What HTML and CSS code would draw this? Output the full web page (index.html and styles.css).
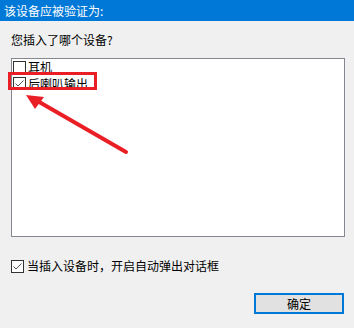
FILE: index.html
```html
<!DOCTYPE html>
<html lang="zh-CN">
<head>
<meta charset="utf-8">
<title>设备</title>
<link rel="stylesheet" href="styles.css">
</head>
<body>
<div class="titlebar">该设备应被验证为:</div>
<div class="content">
  <div class="question">您插入了哪个设备?</div>
  <div class="listbox">
    <div class="item"><span class="cb"></span><span>耳机</span></div>
    <div class="item"><span class="cb checked"><svg viewBox="0 0 11 11" width="11" height="11"><path d="M1.5 5.5 L4 8 L9.5 2.5" fill="none" stroke="#555" stroke-width="1"/></svg></span><span>后喇叭输出</span></div>
  </div>
  <div class="autorow"><span class="cb checked"><svg viewBox="0 0 11 11" width="11" height="11"><path d="M1.5 5.5 L4 8 L9.5 2.5" fill="none" stroke="#555" stroke-width="1"/></svg></span><span>当插入设备时，开启自动弹出对话框</span></div>
  <div class="buttons"><button class="btn">确定</button></div>
</div>
<div class="highlight"></div>
<svg class="arrow" width="354" height="328" viewBox="0 0 354 328">
  <line x1="126" y1="152" x2="34" y2="99" stroke="#ea1f26" stroke-width="4" stroke-linecap="round"/>
  <polygon points="26,95 44,97 35,109" fill="#ea1f26"/>
</svg>
</body>
</html>
```
FILE: styles.css
```css
html, body {
  margin: 0;
  padding: 0;
}
body {
  width: 354px;
  height: 328px;
  background: #f0f0f0;
  font-family: "Noto Sans CJK SC", "Microsoft YaHei", sans-serif;
  font-size: 12px;
  color: #000;
  position: relative;
  overflow: hidden;
}
.titlebar {
  height: 21px;
  line-height: 21px;
  background: #0078d7;
  color: #fff;
  padding-left: 4px;
}
.content {
  padding: 0 10px 0 11px;
}
.question {
  margin-top: 11px;
  line-height: 16px;
}
.listbox {
  margin-top: 10px;
  width: 331px;
  height: 177px;
  border: 1px solid #828790;
  background: #fff;
  padding: 0 0 0 1px;
  box-sizing: content-box;
}
.item {
  display: flex;
  align-items: center;
  height: 16.5px;
  line-height: 16px;
}
.item:first-child {
  margin-top: 0;
}
.cb {
  display: inline-flex;
  align-items: center;
  justify-content: center;
  width: 11px;
  height: 11px;
  border: 1px solid #333;
  background: #fff;
  margin-right: 2px;
  flex: none;
}
.cb svg {
  display: block;
}
.autorow {
  margin-top: 21px;
  display: flex;
  align-items: center;
  height: 16px;
  line-height: 16px;
}
.autorow .cb {
  margin-right: 3px;
}
.buttons {
  display: flex;
  justify-content: flex-end;
  margin-top: 19px;
}
.btn {
  width: 90px;
  height: 21px;
  box-sizing: border-box;
  border: 2px solid #0078d7;
  background: #e1e1e1;
  font-family: inherit;
  font-size: 12px;
  line-height: 15px;
  padding: 0;
  color: #000;
}
.highlight {
  position: absolute;
  left: 8px;
  top: 72px;
  width: 83px;
  height: 12px;
  border: 3px solid #ea1f26;
}
.arrow {
  position: absolute;
  left: 0;
  top: 0;
  pointer-events: none;
}
```
